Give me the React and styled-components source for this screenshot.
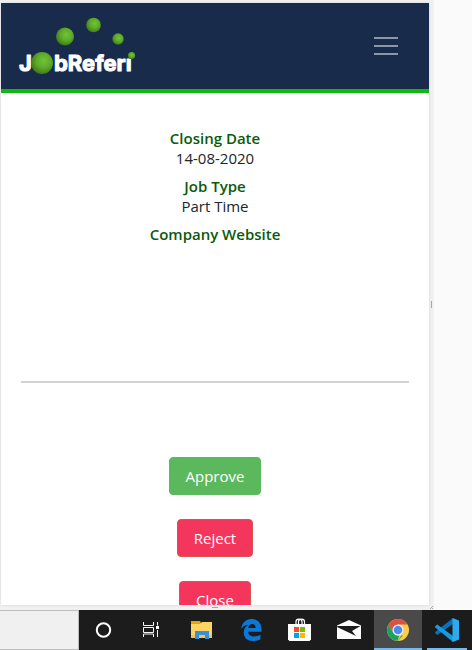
import React from "react";
import styled, { createGlobalStyle } from "styled-components";

const Global = createGlobalStyle`
  * { box-sizing: border-box; }
  body { margin: 0; background: #fafafa; font-family: "Open Sans", "Noto Sans", sans-serif; }
  button { font-family: inherit; }
`;

const Desktop = styled.div`
  display: flex;
  flex-direction: column;
  height: 100vh;
  overflow: hidden;
`;

const Workspace = styled.div`
  flex: 1;
  min-height: 0;
  display: grid;
  grid-template-columns: minmax(0, 1fr) 38px;
`;

const Device = styled.div`
  min-height: 0;
  display: grid;
  grid-template-columns: minmax(0, 1fr) 5px;
  grid-template-rows: minmax(0, 1fr) 5px;
  padding: 3px 0 0 1px;
  background: #f1f1f1;
`;

const Viewport = styled.div`
  min-height: 0;
  overflow: hidden;
  background: #fff;
  box-shadow: 0 0 3px rgba(0, 0, 0, 0.12);
`;

const Handle = styled.div`
  display: flex;
  align-items: center;
  justify-content: center;

  &::after {
    content: "";
    width: ${(p) => (p.$vertical ? "1px" : "6px")};
    height: ${(p) => (p.$vertical ? "7px" : "1px")};
    background: #a8a8a8;
  }
`;

const Corner = styled.svg`
  display: block;
  width: 5px;
  height: 5px;
`;

const Header = styled.header`
  display: flex;
  align-items: center;
  justify-content: space-between;
  height: 90px;
  padding: 0 28px 0 16px;
  background: #182b4b;
  border-bottom: 4px solid #10b910;
`;

const HomeLink = styled.a`
  display: block;
  svg { display: block; }
`;

const LogoText = styled.text`
  font-family: "Inter", sans-serif;
  font-weight: 700;
  font-size: 22px;
  fill: #fff;
  stroke: #fff;
  stroke-width: 1px;
  stroke-linejoin: round;
`;

const MenuButton = styled.button`
  display: flex;
  flex-direction: column;
  gap: 6px;
  padding: 3px;
  border: 0;
  background: none;
`;

const MenuLine = styled.span`
  width: 24px;
  height: 2px;
  background: #8c95a5;
`;

const Content = styled.main`
  padding: 35px 20px 0;
`;

const Details = styled.dl`
  display: flex;
  flex-direction: column;
  gap: 8px;
  min-height: 253px;
  margin: 0;
  text-align: center;
  font-size: 16px;
  line-height: 20px;
`;

const Term = styled.dt`
  font-size: 15px;
  font-weight: 600;
  color: #0b5a0b;
`;

const Value = styled.dd`
  margin: 0;
  font-size: 15px;
  font-weight: 400;
  color: #212529;
`;

const Divider = styled.hr`
  height: 2px;
  margin: 0;
  border: 0;
  background: #d2d2d2;
`;

const Actions = styled.div`
  display: flex;
  flex-direction: column;
  align-items: center;
  gap: 24px;
  padding-top: 74px;
`;

const ActionButton = styled.button`
  height: 38px;
  padding: 0 16px;
  border: 1px solid ${(p) => (p.$danger ? "#d9534f" : "#5cb85c")};
  border-radius: 4px;
  background: ${(p) => (p.$danger ? "#f5365c" : "#5cb85c")};
  color: #fff;
  font-size: 15px;
  line-height: 24px;
`;

const Taskbar = styled.nav`
  display: flex;
  flex: none;
  gap: 1px;
  height: 40px;
  background: #1c1c1c;
`;

const SearchBox = styled.input`
  width: 79px;
  height: 40px;
  padding: 0 8px;
  border: 1px solid #bdbdbd;
  border-left: 0;
  border-radius: 0;
  background: #f0f0f0;
`;

const TaskButton = styled.button`
  display: flex;
  align-items: center;
  justify-content: center;
  flex: none;
  position: relative;
  width: 48px;
  height: 40px;
  padding: 0;
  border: 0;
  background: ${(p) => (p.$active ? "#4a4a4a" : "transparent")};

  &::after {
    content: "";
    display: ${(p) => (p.$running || p.$active ? "block" : "none")};
    position: absolute;
    bottom: 0;
    left: ${(p) => (p.$active ? "0" : "4px")};
    right: ${(p) => (p.$active ? "0" : "4px")};
    height: 2px;
    background: #76b9ed;
  }
`;

const Icon = ({ children }) => (
  <svg width="26" height="26" viewBox="0 0 26 26" aria-hidden="true">{children}</svg>
);

const Logo = () => (
  <svg width="120" height="64" viewBox="0 0 120 64" role="img" aria-label="JobReferi">
    <defs>
      <radialGradient id="ball" cx="0.58" cy="0.4" r="0.65">
        <stop offset="0" stopColor="#72c433" />
        <stop offset="0.5" stopColor="#5dab2a" />
        <stop offset="1" stopColor="#3c7418" />
      </radialGradient>
    </defs>
    <LogoText x="2" y="57">J</LogoText>
    <LogoText x="37" y="57">bReferı</LogoText>
    <g fill="url(#ball)">
      <circle cx="25" cy="49" r="11" />
      <circle cx="48" cy="22.500" r="9" />
      <circle cx="76.500" cy="11" r="7.300" />
      <circle cx="101" cy="25" r="5.700" />
      <circle cx="114.500" cy="41.500" r="3.600" />
    </g>
  </svg>
);

const CortanaIcon = () => (
  <Icon><circle cx="12.500" cy="13" r="6.700" fill="none" stroke="#fff" strokeWidth="2" /></Icon>
);

const TaskViewIcon = () => (
  <Icon>
    <path d="M3.500 5v3.500h10V5M3.500 20v-3h10v3M3.500 10.500h10v5h-10zM17.500 5v3.500M17.500 13v7" fill="none" stroke="#f4f4f4" />
    <path d="M16 9h3v3h-3z" fill="#fff" />
  </Icon>
);

const ExplorerIcon = () => (
  <Icon>
    <path d="M2 4h9l1 2h11v15H2z" fill="#e4a30b" />
    <path d="M2 7h9l2-2h10v16H2z" fill="#fcd463" />
    <path d="M2 18h21v3H2z" fill="#f5c345" />
    <path d="M6 22v-8h14v8h-4v-4h-6v4z" fill="#3590dd" />
  </Icon>
);

const EdgeIcon = () => (
  <Icon>
    <path
      d="M3.200 12C4 5.800 8 2 13.500 2 20 2 23.500 6.400 23.500 12.300v2.500H10.200c.2 3.300 2.700 4.700 6 4.700 2.300 0 4.300-.6 6.200-1.700v4.500c-2 1.100-4.600 1.700-7.400 1.700-5.800 0-9.300-3.400-9.300-8.500 0-3.300 1.600-6 4.600-7.800C7 8 4.800 9.400 3.200 12zm7-1h7.400c0-2.600-1.200-4-3.500-4-2.100 0-3.500 1.500-3.900 4z"
      fill="#0b78d7"
    />
  </Icon>
);

const StoreIcon = () => (
  <Icon>
    <path d="M9 8V4.500c0-3.300 6-3.300 6 0V8M11.500 8V4.500c0-3.300 6-3.300 6 0V8" fill="none" stroke="#fff" strokeWidth="1.200" />
    <path d="M1 7h23v15.500L22.500 24h-20L1 22.500z" fill="#fff" />
    <path d="M7 10h5v5H7z" fill="#f25022" />
    <path d="M13 10h5v5h-5z" fill="#7fba00" />
    <path d="M7 16h5v5H7z" fill="#00a4ef" />
    <path d="M13 16h5v5h-5z" fill="#ffb900" />
  </Icon>
);

const MailIcon = () => (
  <Icon>
    <path d="M1 8.500 13 3l12 5.500V22H1z" fill="#fff" />
    <path d="M1.500 9h23L16 14l4 5-19-9z" fill="#1c1c1c" />
  </Icon>
);

const ChromeIcon = () => (
  <Icon>
    <circle cx="13" cy="13" r="11" fill="#fccd48" />
    <path d="M3.500 7.500A11 11 0 0 1 22.500 7.500H13L8.200 15.700z" fill="#dd5144" />
    <path d="M3.500 7.500 8.200 15.700 13 18.500h4.800L13 24A11 11 0 0 1 3.500 7.500z" fill="#1ba261" />
    <path d="M17.800 15.800 13 24h-.5l2-6z" fill="#fccd48" />
    <circle cx="13" cy="13" r="5.500" fill="#f4f4f4" />
    <circle cx="13" cy="13" r="4.300" fill="#4c8bf5" />
  </Icon>
);

const CodeIcon = () => (
  <Icon>
    <path d="m1 16 2.200 2L19 7V1L1.300 15z" fill="#0873b8" />
    <path d="m1 9.500 2.200-2L19 19v6L1.300 10.500z" fill="#159be0" />
    <path d="m18.500 1 6.500 2.500v19L18.500 25z" fill="#2bacf1" />
  </Icon>
);

const jobDetails = [
  { label: "Closing Date", value: "14-08-2020" },
  { label: "Job Type", value: "Part Time" },
  { label: "Company Website" },
];

const tasks = [
  { name: "Cortana", Glyph: CortanaIcon },
  { name: "Task View", Glyph: TaskViewIcon },
  { name: "File Explorer", Glyph: ExplorerIcon },
  { name: "Microsoft Edge", Glyph: EdgeIcon },
  { name: "Microsoft Store", Glyph: StoreIcon },
  { name: "Mail", Glyph: MailIcon },
  { name: "Google Chrome", Glyph: ChromeIcon, active: true },
  { name: "Visual Studio Code", Glyph: CodeIcon, running: true },
];

export default function App() {
  return (
    <Desktop>
      <Global />
      <Workspace>
        <Device>
          <Viewport>
            <Header>
              <HomeLink href="#home"><Logo /></HomeLink>
              <MenuButton type="button" aria-label="Open menu">
                <MenuLine /><MenuLine /><MenuLine />
              </MenuButton>
            </Header>
            <Content>
              <Details>
                {jobDetails.map(({ label, value }) => (
                  <div key={label}>
                    <Term>{label}</Term>
                    {value && <Value>{value}</Value>}
                  </div>
                ))}
              </Details>
              <Divider />
              <Actions>
                <ActionButton type="button">Approve</ActionButton>
                <ActionButton type="button" $danger>Reject</ActionButton>
                <ActionButton type="button" $danger>Close</ActionButton>
              </Actions>
            </Content>
          </Viewport>
          <Handle $vertical />
          <Handle />
          <Corner viewBox="0 0 5 5" aria-hidden="true">
            <path d="M1 4 4 1M3 4l1-1" stroke="#aaa" />
          </Corner>
        </Device>
      </Workspace>
      <Taskbar aria-label="Taskbar">
        <SearchBox type="search" aria-label="Search" />
        {tasks.map(({ name, Glyph, active, running }) => (
          <TaskButton key={name} type="button" aria-label={name} $active={active} $running={running}>
            <Glyph />
          </TaskButton>
        ))}
      </Taskbar>
    </Desktop>
  );
}
